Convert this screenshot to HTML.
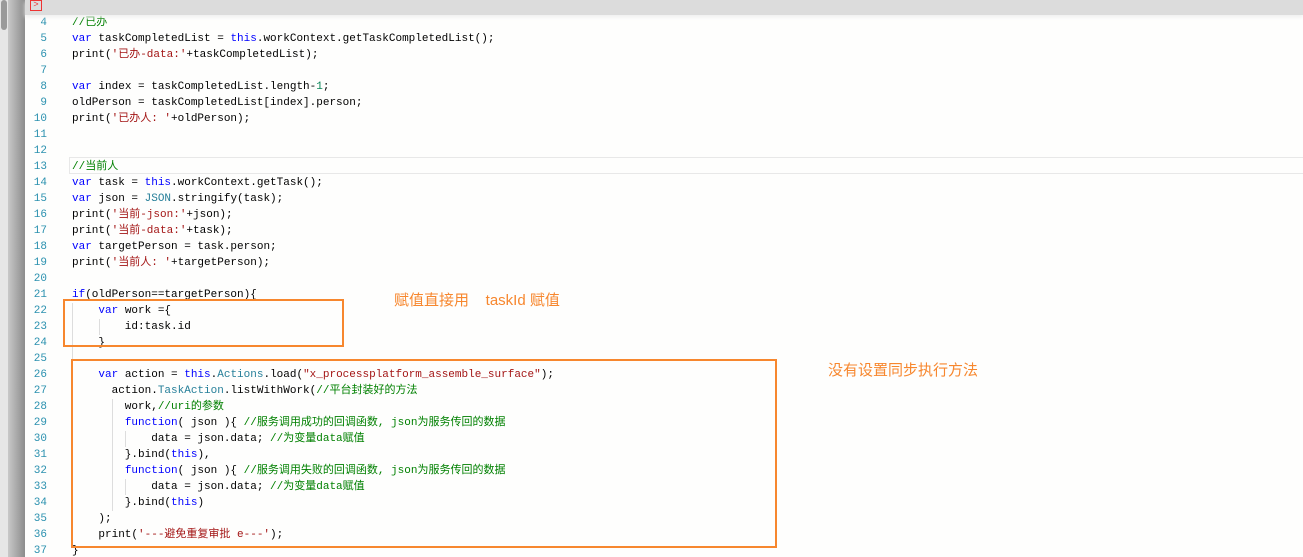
<!DOCTYPE html>
<html><head><meta charset="utf-8"><style>
html,body{margin:0;width:1303px;height:557px;overflow:hidden;}
body{background:#fefefd;position:relative;font-family:"Liberation Mono","Noto Sans CJK SC",monospace;}
.sb{position:absolute;left:0;top:0;width:8px;height:557px;background:#e6e6e6;}
.sbt{position:absolute;left:1px;top:0;width:6px;height:30px;background:#9a9a9a;border-radius:3px;}
.gr{position:absolute;left:8px;top:0;width:17px;height:557px;background:linear-gradient(to right,#c8c8c8,#8c8c8c);}
.top{position:absolute;left:25px;top:0;width:1278px;height:15px;background:#dcdcdc;box-shadow:0 2px 4px #eee;}
.ic{position:absolute;left:30px;top:0;width:10px;height:9px;border:1px solid #e33;color:#e33;font-size:9px;line-height:9px;text-align:center;}
.ln{position:absolute;left:25px;width:22px;text-align:right;color:#2b91af;font-size:11px;line-height:16px;}
.cd{position:absolute;left:72px;font-size:11px;line-height:16px;white-space:pre;color:#000;}
.k{color:#0000ff}.s{color:#a31515}.c{color:#008000}.t{color:#267f99}.n{color:#098658}
.hl{position:absolute;left:69px;top:157px;width:1240px;height:15px;border:1px solid #e8e8e8;}
.box{position:absolute;border:2px solid #f7872e;}
.an{position:absolute;color:#f7872e;font-family:"Liberation Sans","Noto Sans CJK SC",sans-serif;font-size:15px;}
.g{position:absolute;width:1px;background:#ddd;}
</style></head><body>
<div class="sb"><div class="sbt"></div></div><div class="gr"></div>
<div class="hl"></div>
<div class="g" style="left:72px;top:303px;height:240px"></div>
<div class="g" style="left:99px;top:319px;height:16px"></div>
<div class="g" style="left:112px;top:399px;height:112px"></div>
<div class="g" style="left:125px;top:431px;height:16px"></div>
<div class="g" style="left:125px;top:479px;height:16px"></div>
<div class="cd" style="top:15px"><span class="c">//已办</span>
<span class="k">var</span> taskCompletedList = <span class="k">this</span>.workContext.getTaskCompletedList();
print(<span class="s">'已办-data:'</span>+taskCompletedList);

<span class="k">var</span> index = taskCompletedList.length-<span class="n">1</span>;
oldPerson = taskCompletedList[index].person;
print(<span class="s">'已办人: '</span>+oldPerson);


<span class="c">//当前人</span>
<span class="k">var</span> task = <span class="k">this</span>.workContext.getTask();
<span class="k">var</span> json = <span class="t">JSON</span>.stringify(task);
print(<span class="s">'当前-json:'</span>+json);
print(<span class="s">'当前-data:'</span>+task);
<span class="k">var</span> targetPerson = task.person;
print(<span class="s">'当前人: '</span>+targetPerson);

<span class="k">if</span>(oldPerson==targetPerson){
    <span class="k">var</span> work ={
        id:task.id
    }

    <span class="k">var</span> action = <span class="k">this</span>.<span class="t">Actions</span>.load(<span class="s">"x_processplatform_assemble_surface"</span>);
      action.<span class="t">TaskAction</span>.listWithWork(<span class="c">//平台封装好的方法</span>
        work,<span class="c">//uri的参数</span>
        <span class="k">function</span>( json ){ <span class="c">//服务调用成功的回调函数, json为服务传回的数据</span>
            data = json.data; <span class="c">//为变量data赋值</span>
        }.bind(<span class="k">this</span>),
        <span class="k">function</span>( json ){ <span class="c">//服务调用失败的回调函数, json为服务传回的数据</span>
            data = json.data; <span class="c">//为变量data赋值</span>
        }.bind(<span class="k">this</span>)
    );
    print(<span class="s">'---避免重复审批 e---'</span>);
}</div>
<div class="ln" style="top:15px">4<br>5<br>6<br>7<br>8<br>9<br>10<br>11<br>12<br>13<br>14<br>15<br>16<br>17<br>18<br>19<br>20<br>21<br>22<br>23<br>24<br>25<br>26<br>27<br>28<br>29<br>30<br>31<br>32<br>33<br>34<br>35<br>36<br>37</div>
<div class="top"></div><div class="ic">&gt;</div>
<div class="box" style="left:63px;top:299px;width:277px;height:44px"></div>
<div class="box" style="left:71px;top:359px;width:702px;height:185px"></div>
<div class="an" style="left:394px;top:289px">赋值直接用&nbsp;&nbsp;&nbsp;&nbsp;taskId 赋值</div>
<div class="an" style="left:828px;top:359px">没有设置同步执行方法</div>
</body></html>
